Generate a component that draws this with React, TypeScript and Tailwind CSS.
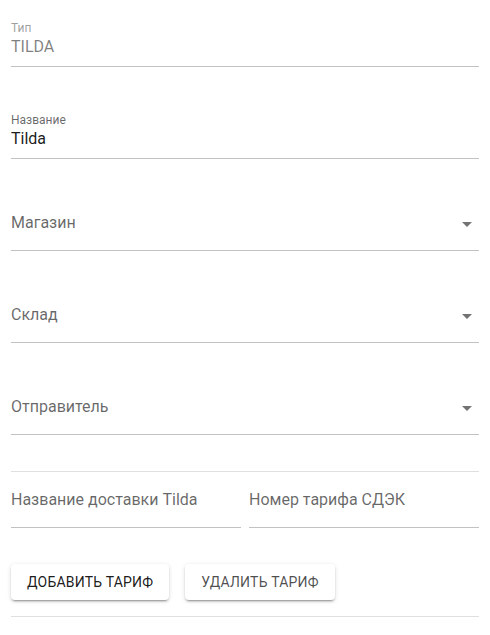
import React from 'react';

function ArrowDrop() {
  return (
    <svg viewBox="0 0 24 24" className="w-6 h-6 -mt-px fill-black/55 shrink-0">
      <path d="M7 10l5 5 5-5z" />
    </svg>
  );
}

function FilledField({ label, value, disabled }: { label: string; value: string; disabled?: boolean }) {
  return (
    <div className="pt-[20px] pb-[9px] border-b border-[#c2c2c2]">
      <div className={`text-xs leading-4 ${disabled ? 'text-black/40' : 'text-black/60'}`}>{label}</div>
      <div className={`mt-px text-base leading-5 ${disabled ? 'text-black/50' : 'text-black/90'}`}>{value}</div>
    </div>
  );
}

function SelectField({ label }: { label: string }) {
  return (
    <div className="h-[67px] pt-[29px] border-b border-[#c2c2c2] flex items-start justify-between">
      <span className="text-base leading-5 text-black/60">{label}</span>
      <ArrowDrop />
    </div>
  );
}

export default function App() {
  return (
    <div className="w-[490px] h-[635px] bg-white px-[11px] overflow-hidden" style={{ fontFamily: 'Roboto, "Noto Sans", sans-serif' }}>
      <div className="flex flex-col gap-[25px]">
        <FilledField label="Тип" value="TILDA" disabled />
        <FilledField label="Название" value="Tilda" />
        <SelectField label="Магазин" />
        <SelectField label="Склад" />
        <SelectField label="Отправитель" />
      </div>
      <div className="mt-[36px] h-px bg-[#e0e0e0]" />
      <div className="flex gap-2">
        <div className="flex-1 pt-[18px] pb-[17px] border-b border-[#c2c2c2] text-base leading-5 text-black/60">Название доставки Tilda</div>
        <div className="flex-1 pt-[18px] pb-[17px] border-b border-[#c2c2c2] text-base leading-5 text-black/60">Номер тарифа СДЭК</div>
      </div>
      <div className="mt-[36px] flex gap-4">
        <button className="h-9 px-4 rounded bg-white text-sm font-normal uppercase tracking-[0.2px] text-black/90 shadow-[0_3px_1px_-2px_rgba(0,0,0,0.2),0_2px_2px_0_rgba(0,0,0,0.14),0_1px_5px_0_rgba(0,0,0,0.12)]">
          Добавить тариф
        </button>
        <button className="h-9 px-4 rounded bg-white text-sm font-normal uppercase tracking-[0.2px] text-black/70 shadow-[0_3px_1px_-2px_rgba(0,0,0,0.2),0_2px_2px_0_rgba(0,0,0,0.14),0_1px_5px_0_rgba(0,0,0,0.12)]">
          Удалить тариф
        </button>
      </div>
      <div className="mt-4 h-px bg-[#e0e0e0]" />
    </div>
  );
}
